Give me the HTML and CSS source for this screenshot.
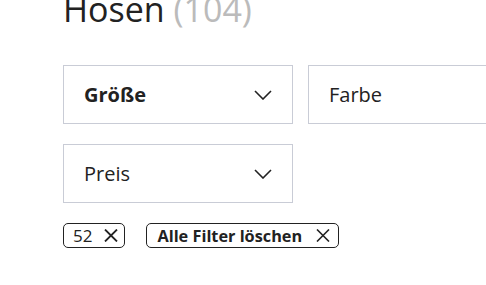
FILE: index.html
```html
<!DOCTYPE html>
<html lang="de">
<head>
    <meta charset="UTF-8">
    <meta name="viewport" content="width=device-width, initial-scale=1.0">
    <title>Hosen</title>
    <link rel="stylesheet" href="styles.css">
</head>
<body>
    <div class="page">
        <h1 class="title">Hosen <span class="count">(104)</span></h1>

        <div class="filters">
            <div class="filter active">
                <span>Größe</span>
                <svg class="chevron" viewBox="0 0 18 10" width="18" height="10">
                    <path d="M1 1l8 8 8-8" fill="none" stroke="#222" stroke-width="1.6"/>
                </svg>
            </div>
            <div class="filter">
                <span>Farbe</span>
                <svg class="chevron" viewBox="0 0 18 10" width="18" height="10">
                    <path d="M1 1l8 8 8-8" fill="none" stroke="#222" stroke-width="1.6"/>
                </svg>
            </div>
            <div class="filter">
                <span>Preis</span>
                <svg class="chevron" viewBox="0 0 18 10" width="18" height="10">
                    <path d="M1 1l8 8 8-8" fill="none" stroke="#222" stroke-width="1.6"/>
                </svg>
            </div>
        </div>

        <div class="chips">
            <button class="chip">52
                <svg viewBox="0 0 14 13" width="14" height="13">
                    <path d="M1 0.5l12 12M13 0.5L1 12.5" stroke="#222" stroke-width="1.8"/>
                </svg>
            </button>
            <button class="chip bold">Alle Filter löschen
                <svg viewBox="0 0 14 13" width="14" height="13">
                    <path d="M1 0.5l12 12M13 0.5L1 12.5" stroke="#222" stroke-width="1.6"/>
                </svg>
            </button>
        </div>
    </div>
</body>
</html>
```

FILE: styles.css
```css
body {
    margin: 0;
    background: #fff;
    color: #222;
    font-family: "Open Sans", sans-serif;
    overflow: hidden;
}

.page {
    padding-left: 63px;
    margin-top: -14px;
}

.title {
    margin: 0;
    font-size: 34px;
    font-weight: 400;
    line-height: 46px;
}

.count {
    color: #bbb;
}

.filters {
    display: grid;
    grid-template-columns: 230px 230px;
    column-gap: 15px;
    row-gap: 20px;
    margin-top: 33px;
}

.filter {
    height: 59px;
    box-sizing: border-box;
    border: 1px solid #c9ccd6;
    display: flex;
    align-items: center;
    justify-content: space-between;
    padding: 0 20px 0 20px;
    font-size: 20px;
}

.filter.active {
    font-weight: 700;
}

.chips {
    display: flex;
    gap: 21px;
    margin-top: 20px;
}

.chip {
    display: flex;
    align-items: center;
    gap: 12px;
    height: 25px;
    box-sizing: border-box;
    border: 1px solid #222;
    border-radius: 5px;
    background: #fff;
    padding: 0 6px 0 9px;
    font-family: "Open Sans", sans-serif;
    font-size: 17px;
    color: #222;
}

.chip.bold {
    font-weight: 700;
    font-size: 16.3px;
    gap: 14px;
    padding-left: 10px;
    padding-right: 8px;
}
```
